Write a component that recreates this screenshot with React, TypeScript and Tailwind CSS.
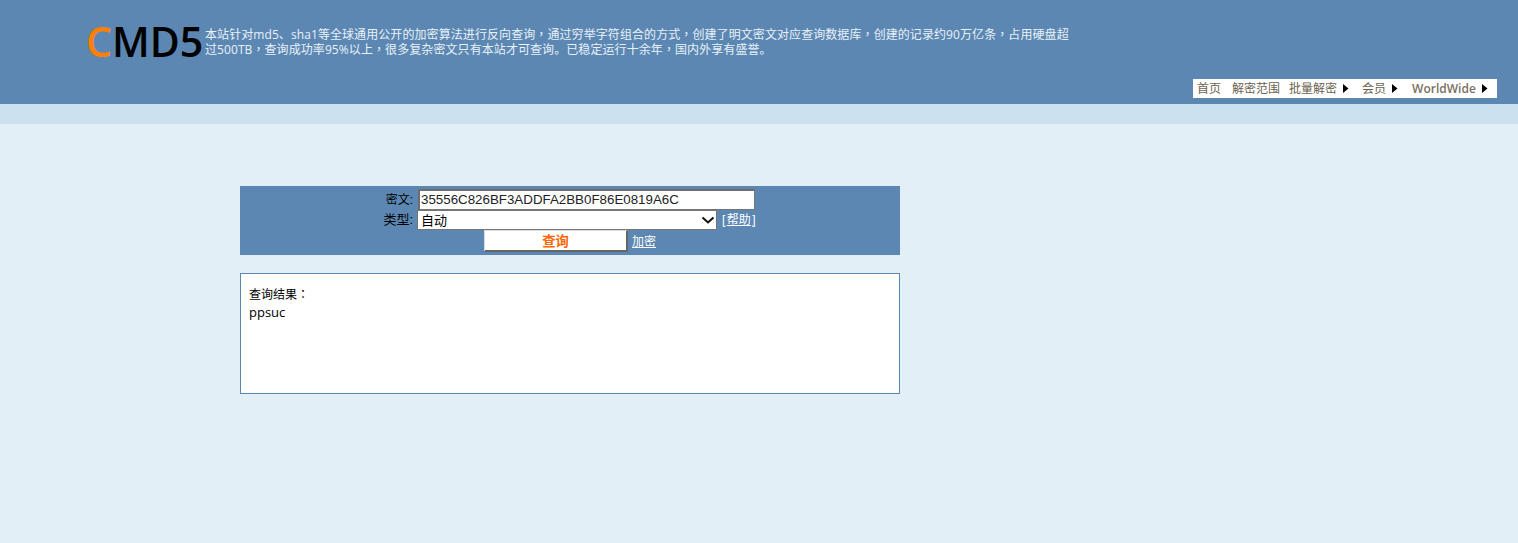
import React from 'react';

const Arrow = () => (
  <svg width="6" height="9" viewBox="0 0 6 9" className="ml-[6px] shrink-0">
    <path d="M0 0 L5.5 4.5 L0 9 Z" fill="#000" />
  </svg>
);

// the reference draws the full width comma centred in its box
const Comma = () => <span className="font-['Noto_Sans_CJK_TC',sans-serif]">{'\uFF0C'}</span>;

const App: React.FC = () => {
  return (
    <div className="min-h-[543px] bg-[#e2eff7] font-['Liberation_Sans','Noto_Sans_CJK_SC',sans-serif] text-[13px] text-black">
      {/* header */}
      <div className="h-[104px] bg-[#5c87b2] flex flex-col">
        <div className="flex items-start pl-[86px] pt-[16px] h-[79px]">
          <div className="font-['Open_Sans',sans-serif] font-semibold text-[41px] leading-[50px] w-[119px] shrink-0 whitespace-nowrap">
            <span className="text-[#ff8000]">C</span>
            <span className="text-black">MD5</span>
          </div>
          <p className="w-[870px] mt-[11px] font-['Open_Sans','Noto_Sans_CJK_SC',sans-serif] text-[12px] tracking-[0.08px] leading-[14px] text-[#e8f2fa]">
            本站针对md5、sha1等全球通用公开的加密算法进行反向查询<Comma />通过穷举字符组合的方式<Comma />创建了明文密文对应查询数据库<Comma />创建的记录约90万亿条<Comma />占用硬盘超过500TB<Comma />查询成功率95%以上<Comma />很多复杂密文只有本站才可查询。已稳定运行十余年<Comma />国内外享有盛誉。
          </p>
        </div>
        <div className="flex justify-end pr-[21px]">
          <div className="flex items-center h-[19px] w-[304px] bg-white pl-[4px] text-[12px] text-[#6b6350] whitespace-nowrap">
            <span>首页</span>
            <span className="ml-[11px]">解密范围</span>
            <span className="ml-[9px]">批量解密</span>
            <Arrow />
            <span className="ml-[13px]">会员</span>
            <Arrow />
            <span className="ml-[14px] font-['Open_Sans',sans-serif] font-semibold text-[#7a7160]">WorldWide</span>
            <Arrow />
          </div>
        </div>
      </div>
      <div className="h-[20px] bg-[#cbe1f0]" />

      {/* query form */}
      <div className="ml-[240px] mt-[62px] w-[660px]">
        <div className="h-[69px] bg-[#5c87b2] pt-[3px] flex flex-col items-start">
          <div className="flex items-center h-[21px]">
            <label className="w-[173px] text-right text-[12px] leading-[21px] pt-[1px]">密文:</label>
            <input
              readOnly
              value="35556C826BF3ADDFA2BB0F86E0819A6C"
              className="ml-[5px] w-[337px] h-[21px] bg-white border border-[#767676] border-t-2 border-l-2 border-t-[#6e6e6e] border-l-[#6e6e6e] pl-[1px] pb-[2px] text-[13.33px] text-[#222] outline-none"
            />
          </div>
          <div className="flex items-center h-[20px]">
            <label className="w-[173px] text-right text-[13px] leading-[20px]">类型:</label>
            <select className="ml-[4px] w-[300px] h-[20px] bg-white border border-[#767676] text-[13px] text-black appearance-none pl-[3px] pb-[2px] outline-none">
              <option>自动</option>
            </select>
            <svg width="14" height="8" viewBox="0 0 14 8" className="ml-[-16px] mr-[2px] shrink-0">
              <path d="M1.5 1.5 L7 6.5 L12.5 1.5" fill="none" stroke="#111" strokeWidth="2" />
            </svg>
            <a className="ml-[5px] text-[12px] text-white underline">
              [<span className="px-[1.5px]">帮助</span>]
            </a>
          </div>
          <div className="flex items-center h-[22px] pl-[244px]">
            <button className="w-[144px] h-[22px] bg-white border-b-2 border-r-2 border-[#666] border-t border-l border-t-[#ddd] border-l-[#ddd] pt-[1px] text-[13.33px] font-bold text-[#ff6600]">
              查询
            </button>
            <a className="ml-[4px] mt-[1px] text-[12px] text-white underline">加密</a>
          </div>
        </div>

        {/* result */}
        <div className="mt-[18px] h-[121px] bg-white border border-[#5c87b2] pl-[8px] pt-[10px] text-[12px] leading-[19px]">
          <div className="font-['Noto_Sans_CJK_SC',sans-serif]">
            查询结果<span className="font-['Noto_Sans_CJK_TC',sans-serif]">{'\uFF1A'}</span>
          </div>
          <div className="font-['Open_Sans',sans-serif] text-[13px] leading-[18px]">ppsuc</div>
        </div>
      </div>
    </div>
  );
};

export default App;
